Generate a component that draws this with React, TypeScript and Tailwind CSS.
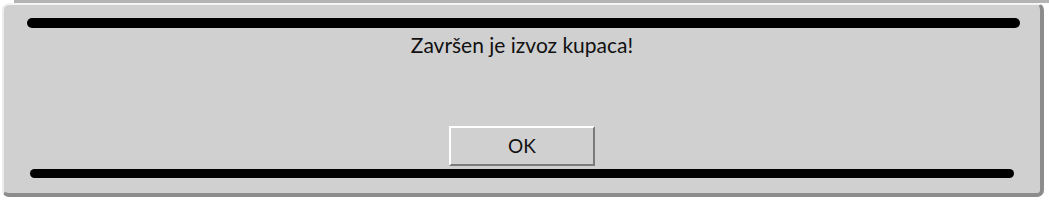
export default function App() {
  return (
    <div className="w-[1049px] h-[200px] bg-white overflow-hidden relative font-['Lato','Liberation_Sans',sans-serif]">
      {/* strip of the window behind */}
      <div className="h-[3px] ml-[14px] bg-[#b4b4b4]" />
      <div className="ml-[2px] w-[1042px] h-[194px] rounded-[7px] bg-[#d0d0d0] border-t-2 border-l-2 border-t-[#f4f4f4] border-l-[#ececec] border-r-[4px] border-b-[4px] border-r-[#8c8c8c] border-b-[#8c8c8c] flex flex-col">
        <div className="mt-[13px] ml-[23px] mr-[20px] h-[10px] rounded-full bg-black" />
        <p className="mt-[5px] text-center text-[21px] leading-[24px] text-[#111]">
          Završen je izvoz kupaca!
        </p>
        <div className="mt-[69px] flex justify-center">
          <button className="w-[146px] h-[40px] bg-[#d0d0d0] border-t-2 border-l-2 border-t-white border-l-white border-r-2 border-b-2 border-r-[#7a7a7a] border-b-[#7a7a7a] text-[19px] text-[#111]">
            OK
          </button>
        </div>
        <div className="mt-[3px] ml-[26px] mr-[26px] h-[9px] rounded-full bg-black" />
      </div>
    </div>
  );
}
